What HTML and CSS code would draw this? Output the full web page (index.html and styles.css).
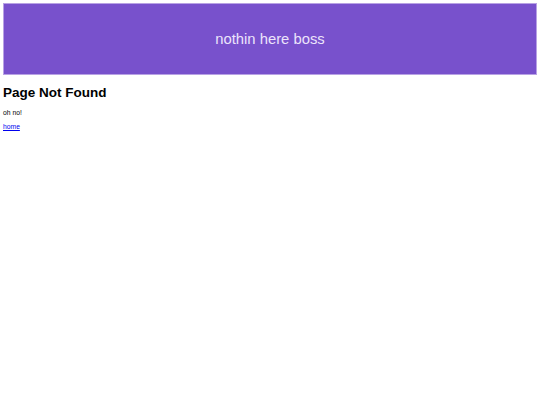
FILE: index.html
```html
<!DOCTYPE html>
<html lang="en">

<head>
    <meta charset="UTF-8">
    <meta name="viewport" content="width=device-width, initial-scale=1.0">
    <title>Page Not Found</title>
    <link rel="stylesheet" href="styles.css">
</head>

<body>

    <!-- Banner -->
    <header class="banner">
        <p>nothin here boss</p>
    </header>

    <!-- Content -->
    <main class="content">
        <h2>Page Not Found</h2>
        <p>oh no!</p>
        <a href="#">home</a>
    </main>

</body>

</html>
```

FILE: styles.css
```css
* {
    margin: 0;
    padding: 0;
    box-sizing: border-box;
    font-family: "Liberation Sans", Arial, sans-serif;
}

body {
    background-color: #ffffff;
    padding: 3px;
}

/* Banner */
.banner {
    display: flex;
    justify-content: center;
    align-items: center;
    height: 72px;
    background-color: #7851cc;
    border: 1px solid #b8a2e4;
}

.banner p {
    color: #ece4fb;
    font-size: 14.8px;
}

/* Content */
.content {
    padding-top: 10px;
    font-size: 6.75px;
}

.content h2 {
    font-size: 13.5px;
    font-weight: bold;
    color: #000;
    margin-bottom: 9px;
}

.content p {
    color: #000;
    margin-bottom: 7px;
}

.content a {
    color: #0000ee;
}
```
